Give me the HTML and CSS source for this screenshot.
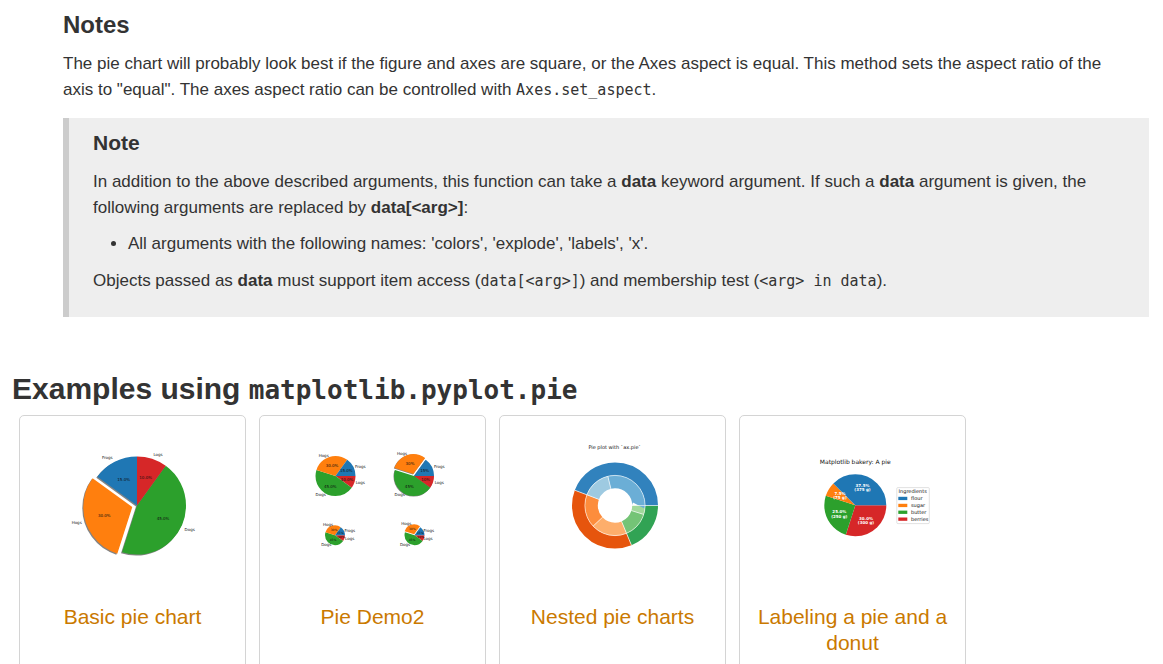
FILE: index.html
```html
<!DOCTYPE html>
<html lang="en">
<head>
<meta charset="utf-8">
<title>matplotlib.pyplot.pie</title>
<link rel="stylesheet" href="styles.css">
</head>
<body>
<main class="page">
  <section class="notes">
    <h3 class="notes-title">Notes</h3>
    <p class="text intro">The pie chart will probably look best if the figure and axes are square, or the Axes aspect is equal. This method sets the aspect ratio of the axis to "equal". The axes aspect ratio can be controlled with <code class="code">Axes.set_aspect</code>.</p>
    <aside class="note">
      <h4 class="note-title">Note</h4>
      <p class="text">In addition to the above described arguments, this function can take a <strong>data</strong> keyword argument. If such a <strong>data</strong> argument is given, the following arguments are replaced by <strong>data[&lt;arg&gt;]</strong>:</p>
      <ul class="list">
        <li>All arguments with the following names: 'colors', 'explode', 'labels', 'x'.</li>
      </ul>
      <p class="text">Objects passed as <strong>data</strong> must support item access (<code class="code">data[&lt;arg&gt;]</code>) and membership test (<code class="code">&lt;arg&gt; in data</code>).</p>
    </aside>
  </section>

  <section class="examples">
    <h2 class="examples-title">Examples using <code class="title-code">matplotlib.pyplot.pie</code></h2>
    <div class="gallery">
      <figure class="card">
        <svg class="thumb" viewBox="32 424 201 160" aria-hidden="true">
          <g class="shadow">
            <circle cx="136" cy="506.5" r="24.5" stroke-width="49" pathLength="100" stroke-dasharray="70 30" stroke-dashoffset="40"/>
            <circle cx="131.3" cy="508" r="24.5" stroke-width="49" pathLength="100" stroke-dasharray="30 70" stroke-dashoffset="-30"/>
          </g>
          <g fill="none" stroke-width="49">
            <circle class="blue" cx="137" cy="505.5" r="24.5" pathLength="100" stroke-dasharray="15 85" stroke-dashoffset="-60"/>
            <circle class="orange" cx="132.3" cy="507" r="24.5" pathLength="100" stroke-dasharray="30 70" stroke-dashoffset="-30"/>
            <circle class="green" cx="137" cy="505.5" r="24.5" pathLength="100" stroke-dasharray="45 55" stroke-dashoffset="15"/>
            <circle class="red" cx="137" cy="505.5" r="24.5" pathLength="100" stroke-dasharray="10 90" stroke-dashoffset="25"/>
          </g>
          <g class="label">
            <text x="107.3" y="459">Frogs</text><text x="158" y="455.5">Logs</text>
            <text x="76.7" y="524">Hogs</text><text x="189.7" y="530.5">Dogs</text>
            <text x="123.7" y="480.5">15.0%</text><text x="145.7" y="479">10.0%</text>
            <text x="104.3" y="516.5">30.0%</text><text x="163" y="519.5">45.0%</text>
          </g>
        </svg>
        <figcaption><a class="link" href="#basic">Basic pie chart</a></figcaption>
      </figure>

      <figure class="card">
        <svg class="thumb" viewBox="272 424 201 160" aria-hidden="true">
          <g fill="none" stroke-width="20">
            <circle class="red" cx="335.5" cy="476" r="10" pathLength="100" stroke-dasharray="10 90"/>
            <circle class="green" cx="335.5" cy="476" r="10" pathLength="100" stroke-dasharray="45 55" stroke-dashoffset="-10"/>
            <circle class="orange" cx="335.5" cy="476" r="10" pathLength="100" stroke-dasharray="30 70" stroke-dashoffset="-55"/>
            <circle class="blue" cx="335.5" cy="476" r="10" pathLength="100" stroke-dasharray="15 85" stroke-dashoffset="-85"/>
          </g>
          <g class="shadow" stroke-width="20">
            <circle cx="413.5" cy="476.5" r="10" pathLength="100" stroke-dasharray="70 30" stroke-dashoffset="15"/>
            <circle cx="412.9" cy="474.6" r="10" pathLength="100" stroke-dasharray="30 70" stroke-dashoffset="-55"/>
          </g>
          <g fill="none" stroke-width="20">
            <circle class="red" cx="414" cy="476" r="10" pathLength="100" stroke-dasharray="10 90"/>
            <circle class="green" cx="414" cy="476" r="10" pathLength="100" stroke-dasharray="45 55" stroke-dashoffset="-10"/>
            <circle class="orange" cx="413.4" cy="474.1" r="10" pathLength="100" stroke-dasharray="30 70" stroke-dashoffset="-55"/>
            <circle class="blue" cx="414" cy="476" r="10" pathLength="100" stroke-dasharray="15 85" stroke-dashoffset="-85"/>
          </g>
          <g fill="none" stroke-width="10">
            <circle class="red" cx="335" cy="535.3" r="5" pathLength="100" stroke-dasharray="10 90"/>
            <circle class="green" cx="335" cy="535.3" r="5" pathLength="100" stroke-dasharray="45 55" stroke-dashoffset="-10"/>
            <circle class="orange" cx="335" cy="535.3" r="5" pathLength="100" stroke-dasharray="30 70" stroke-dashoffset="-55"/>
            <circle class="blue" cx="335" cy="535.3" r="5" pathLength="100" stroke-dasharray="15 85" stroke-dashoffset="-85"/>
            <circle class="red" cx="414.5" cy="535.3" r="5" pathLength="100" stroke-dasharray="10 90"/>
            <circle class="green" cx="414.5" cy="535.3" r="5" pathLength="100" stroke-dasharray="45 55" stroke-dashoffset="-10"/>
            <circle class="orange" cx="414.2" cy="534.3" r="5" pathLength="100" stroke-dasharray="30 70" stroke-dashoffset="-55"/>
            <circle class="blue" cx="414.5" cy="535.3" r="5" pathLength="100" stroke-dasharray="15 85" stroke-dashoffset="-85"/>
          </g>
          <g class="label">
            <text x="323.7" y="457">Hogs</text><text x="360.3" y="467.5">Frogs</text>
            <text x="360.3" y="484">Logs</text><text x="320.7" y="496">Dogs</text>
            <text x="332" y="466.5">30.0%</text><text x="346.3" y="472">15.0%</text>
            <text x="347" y="481">10.0%</text><text x="330.3" y="488">45.0%</text>
            <text x="402" y="455">Hogs</text><text x="439.3" y="467.5">Frogs</text>
            <text x="439.3" y="484">Logs</text><text x="399.7" y="496">Dogs</text>
            <text x="410" y="465">30%</text><text x="424.7" y="472">15%</text>
            <text x="425.7" y="481">10%</text><text x="409.3" y="488">45%</text>
          </g>
          <g class="label">
            <text x="328" y="526">Hogs</text><text x="349.7" y="531.5">Frogs</text>
            <text x="349.7" y="540">Logs</text><text x="326.3" y="546">Dogs</text>
            <text x="406.3" y="525">Hogs</text><text x="428.7" y="531.5">Frogs</text>
            <text x="428" y="540">Logs</text><text x="405" y="546">Dogs</text>
          </g>
          <g class="label label-small">
            <text x="334" y="530.5">30%</text><text x="340.3" y="533.5">15%</text>
            <text x="341.3" y="538">10%</text><text x="333" y="541">45%</text>
            <text x="412.3" y="530">30%</text><text x="420.3" y="533.5">15%</text>
            <text x="420.7" y="538">10%</text><text x="412" y="541">45%</text>
          </g>
        </svg>
        <figcaption><a class="link" href="#demo2">Pie Demo2</a></figcaption>
      </figure>

      <figure class="card">
        <svg class="thumb" viewBox="512 424 201 160" aria-hidden="true">
          <g transform="translate(615 505.5)" fill="none">
            <g stroke-width="13">
              <circle r="36.5" stroke="#31a354" pathLength="208" stroke-dasharray="39 169"/>
              <circle r="36.5" stroke="#e6550d" pathLength="208" stroke-dasharray="77 131" stroke-dashoffset="-39"/>
              <circle r="36.5" stroke="#3182bd" pathLength="208" stroke-dasharray="92 116" stroke-dashoffset="-116"/>
              <circle r="23.7" stroke="#a1d99b" pathLength="208" stroke-dasharray="10 198"/>
              <circle r="23.7" stroke="#74c476" pathLength="208" stroke-dasharray="29 179" stroke-dashoffset="-10"/>
              <circle r="23.7" stroke="#fdae6b" pathLength="208" stroke-dasharray="40 168" stroke-dashoffset="-39"/>
              <circle r="23.7" stroke="#fd8d3c" pathLength="208" stroke-dasharray="37 171" stroke-dashoffset="-79"/>
              <circle r="23.7" stroke="#9ecae1" pathLength="208" stroke-dasharray="32 176" stroke-dashoffset="-116"/>
              <circle r="23.7" stroke="#6baed6" pathLength="208" stroke-dasharray="60 148" stroke-dashoffset="-148"/>
            </g>
            <g stroke="#fff" stroke-width=".6">
              <circle r="30.1"/>
              <path d="M17 0H43"/>
              <path d="M17 0H43" transform="rotate(67.5)"/>
              <path d="M17 0H43" transform="rotate(200.8)"/>
              <path d="M17 0H30" transform="rotate(17.3)"/>
              <path d="M17 0H30" transform="rotate(136.7)"/>
              <path d="M17 0H30" transform="rotate(256.2)"/>
            </g>
          </g>
          <text class="plot-title" x="614.7" y="449">Pie plot with `ax.pie`</text>
        </svg>
        <figcaption><a class="link" href="#nested">Nested pie charts</a></figcaption>
      </figure>

      <figure class="card">
        <svg class="thumb" viewBox="752 424 201 160" aria-hidden="true">
          <g fill="none" stroke-width="31">
            <circle class="red" cx="855.3" cy="505.3" r="15.5" pathLength="100" stroke-dasharray="30 70"/>
            <circle class="green" cx="855.3" cy="505.3" r="15.5" pathLength="100" stroke-dasharray="25 75" stroke-dashoffset="-30"/>
            <circle class="orange" cx="855.3" cy="505.3" r="15.5" pathLength="100" stroke-dasharray="7.5 92.5" stroke-dashoffset="-55"/>
            <circle class="blue" cx="855.3" cy="505.3" r="15.5" pathLength="100" stroke-dasharray="37.5 62.5" stroke-dashoffset="-62.5"/>
          </g>
          <g class="label label-white">
            <text x="862.5" y="487">37.5%</text><text x="862.5" y="491.3">(375 g)</text>
            <text x="840" y="494.7">7.5%</text><text x="840" y="499">(75 g)</text>
            <text x="839.3" y="513.3">25.0%</text><text x="839.3" y="517.5">(250 g)</text>
            <text x="866" y="520">30.0%</text><text x="866" y="524">(300 g)</text>
          </g>
          <text class="plot-title plot-title-large" x="855.3" y="464.3">Matplotlib bakery: A pie</text>
          <rect x="896.8" y="487.6" width="32.5" height="36" rx="1" fill="#fff" stroke="#ccc" stroke-width=".6"/>
          <rect x="898.3" y="496.8" width="9" height="3.3" fill="#1f77b4"/>
          <rect x="898.3" y="503.8" width="9" height="3.3" fill="#ff7f0e"/>
          <rect x="898.3" y="510.6" width="9" height="3.3" fill="#2ca02c"/>
          <rect x="898.3" y="517.5" width="9" height="3.3" fill="#d62728"/>
          <g class="legend">
            <text class="legend-title" x="912.7" y="493.3">Ingredients</text>
            <text x="911" y="500">flour</text><text x="911" y="507">sugar</text>
            <text x="911" y="514">butter</text><text x="911" y="520.7">berries</text>
          </g>
        </svg>
        <figcaption><a class="link" href="#labeling">Labeling a pie and a donut</a></figcaption>
      </figure>
    </div>
  </section>
</main>
</body>
</html>
```
FILE: styles.css
```css
body {
  margin: 0;
  background: #fff;
  color: #333;
  font: 17px/26px "Liberation Sans", Arial, sans-serif;
}

.page {
  padding: 9px 14px 0 12px;
}

.notes {
  margin-left: 51px;
}

.notes-title {
  margin: 0 0 11px;
  font-size: 24px;
  line-height: 31px;
}

.text {
  margin: 0 0 10px;
}

.intro {
  padding-right: 20px;
}

.code,
.title-code {
  font-family: "DejaVu Sans Mono", monospace;
}

.code {
  font-size: 15px;
  line-height: 20px;
}

.note {
  padding: 9px 24px 13px;
  margin-top: 15px;
  border-left: 6px solid #ccc;
  background: #eee;
}

.note-title {
  margin: 0 0 11px;
  font-size: 21px;
  line-height: 31px;
}

.list {
  margin: 0 0 11px;
  padding-left: 35px;
}

.examples {
  margin-top: 51px;
}

.examples-title {
  margin: 0 0 5px;
  font-size: 30px;
  line-height: 42px;
}

.title-code {
  font-size: 26px;
  font-weight: bold;
  line-height: 30px;
}

.gallery {
  display: flex;
  flex-wrap: wrap;
  gap: 13px;
  padding-left: 7px;
}

.card {
  box-sizing: border-box;
  width: 227px;
  min-height: 270px;
  margin: 0;
  padding: 8px 12px;
  border: 1px solid #d4d4d4;
  border-radius: 5px;
  text-align: center;
  font-size: 21px;
}

.thumb {
  display: block;
  width: 100%;
  margin-bottom: 20px;
}

.link {
  color: #ca7900;
  text-decoration: none;
}

.blue { stroke: #1f77b4; }
.orange { stroke: #ff7f0e; }
.green { stroke: #2ca02c; }
.red { stroke: #d62728; }

.shadow {
  fill: none;
  stroke: #666;
  opacity: .8;
}

.label,
.plot-title,
.legend {
  font-family: "DejaVu Sans", sans-serif;
  font-size: 4px;
  line-height: 5px;
  fill: #111;
  text-anchor: middle;
}

.label-small {
  font-size: 3px;
}

.label-white {
  fill: #fff;
  font-weight: bold;
}

.plot-title {
  font-size: 5px;
}

.plot-title-large {
  font-size: 6px;
}

.legend {
  font-size: 5px;
  text-anchor: start;
}

.legend-title {
  text-anchor: middle;
}
```
